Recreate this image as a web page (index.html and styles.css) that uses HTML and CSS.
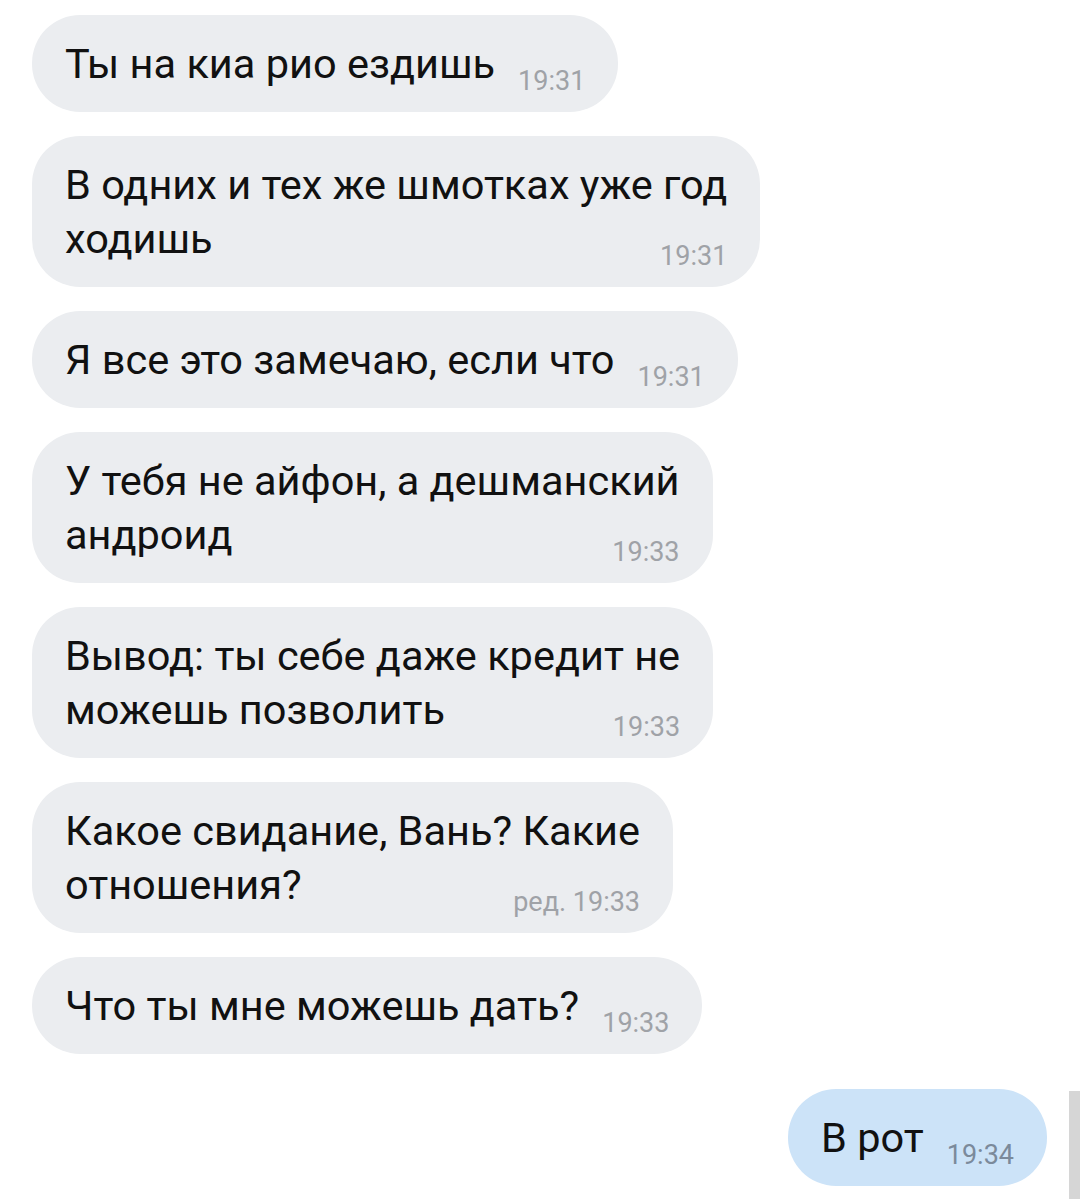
FILE: index.html
```html
<!DOCTYPE html>
<html lang="ru">
<head>
    <meta charset="UTF-8">
    <meta name="viewport" content="width=device-width, initial-scale=1.0">
    <title>Диалог</title>
    <link rel="stylesheet" href="styles.css">
</head>
<body>
    <div class="chat">
        <div class="msg in">
            <div class="bubble">Ты на киа рио ездишь<span class="time">19:31</span></div>
        </div>
        <div class="msg in">
            <div class="bubble">В одних и тех же шмотках уже год<br>ходишь<span class="time">19:31</span></div>
        </div>
        <div class="msg in">
            <div class="bubble">Я все это замечаю, если что<span class="time">19:31</span></div>
        </div>
        <div class="msg in">
            <div class="bubble">У тебя не айфон, а дешманский<br>андроид<span class="time">19:33</span></div>
        </div>
        <div class="msg in">
            <div class="bubble">Вывод: ты себе даже кредит не<br>можешь позволить<span class="time">19:33</span></div>
        </div>
        <div class="msg in">
            <div class="bubble">Какое свидание, Вань? Какие<br>отношения?<span class="time">ред. 19:33</span></div>
        </div>
        <div class="msg in">
            <div class="bubble">Что ты мне можешь дать?<span class="time">19:33</span></div>
        </div>
        <div class="msg out">
            <div class="bubble">В рот<span class="time">19:34</span></div>
        </div>
    </div>
    <div class="scroll-thumb"></div>
</body>
</html>
```

FILE: styles.css
```css
html, body {
    margin: 0;
    background-color: #fff;
}
body {
    font-family: Roboto, "Noto Sans", sans-serif;
    color: #111;
    overflow: hidden;
}
.chat {
    display: flex;
    flex-direction: column;
    gap: 24px;
    padding: 15px 33px 0 32px;
}
.msg {
    display: flex;
}
.msg.out {
    justify-content: flex-end;
    margin-top: 11px;
}
.bubble {
    display: inline-block;
    background-color: #ebedf0;
    border-radius: 48px;
    padding: 22px 33px 21px 33px;
    font-size: 41.5px;
    line-height: 54px;
    white-space: nowrap;
}
.msg.out .bubble {
    background-color: #cce3f8;
}
.time {
    float: right;
    margin: 31px 0 -4px 23px;
    font-size: 27px;
    line-height: 27px;
    color: #9fa2a7;
}
.msg.out .time {
    color: #7b8a9b;
}
.scroll-thumb {
    position: fixed;
    right: 0;
    bottom: 0;
    width: 11px;
    height: 108px;
    background-color: #d6d6d6;
}
```
